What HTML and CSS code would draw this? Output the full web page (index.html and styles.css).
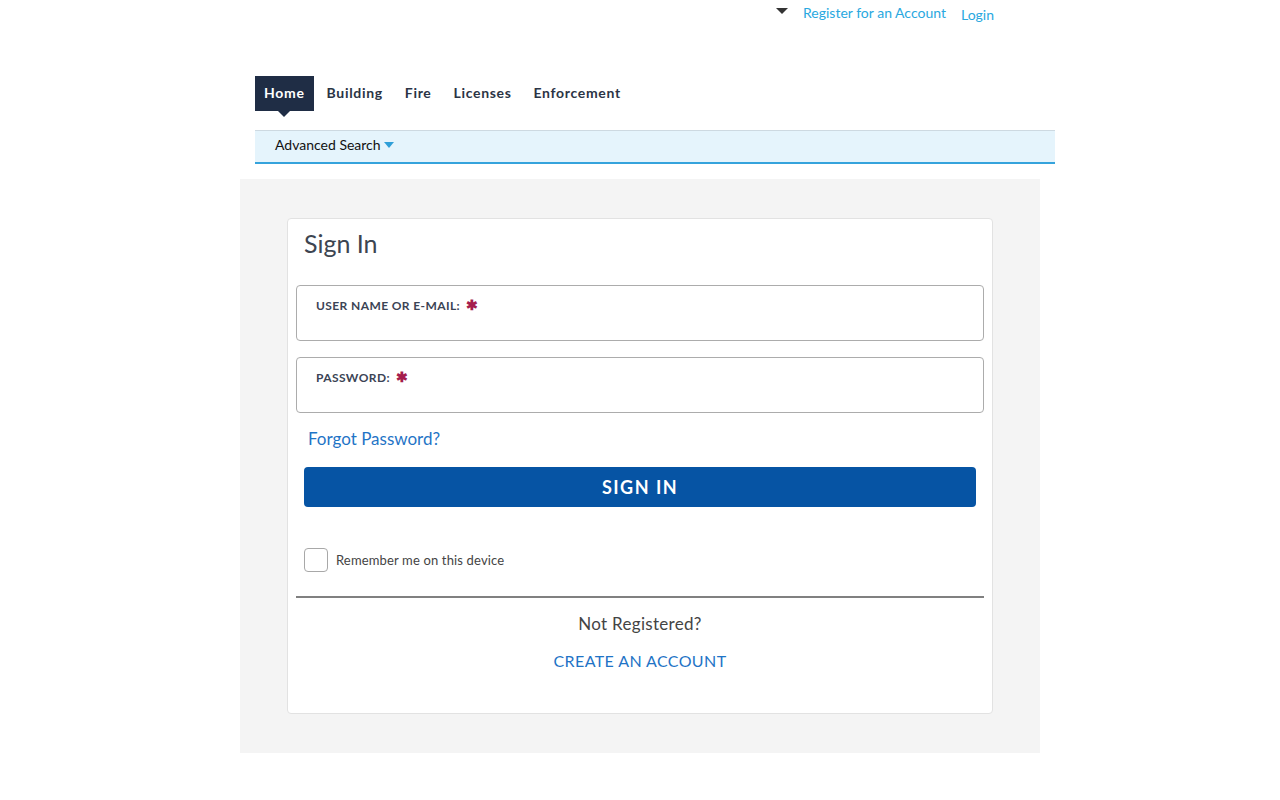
FILE: index.html
```html
<!DOCTYPE html>
<html lang="en">
<head>
    <meta charset="UTF-8">
    <meta name="viewport" content="width=device-width, initial-scale=1.0">
    <title>Sign In</title>
    <link rel="stylesheet" href="styles.css">
</head>
<body>
    <div class="header">
        <div class="top-links">
            <span class="caret-down"></span>
            <a href="#" class="top-link">Register for an Account</a>
            <a href="#" class="top-link login">Login</a>
        </div>

        <ul class="main-nav">
            <li class="nav-item active"><a href="#">Home</a></li>
            <li class="nav-item"><a href="#">Building</a></li>
            <li class="nav-item"><a href="#">Fire</a></li>
            <li class="nav-item"><a href="#">Licenses</a></li>
            <li class="nav-item"><a href="#">Enforcement</a></li>
        </ul>

        <div class="sub-nav">
            <a href="#" class="adv-search">Advanced Search <span class="caret-blue"></span></a>
        </div>
    </div>

    <div class="content">
        <div class="signin-card">
            <h2 class="card-title">Sign In</h2>

            <form id="signInForm">
                <div class="field">
                    <label for="username">User Name or E-mail: <span class="req">&#10033;</span></label>
                    <input type="text" id="username" name="username">
                </div>

                <div class="field">
                    <label for="password">Password: <span class="req">&#10033;</span></label>
                    <input type="password" id="password" name="password">
                </div>

                <a href="#" class="forgot">Forgot Password?</a>

                <button type="submit" class="signin-btn">Sign In</button>

                <label class="remember">
                    <input type="checkbox" name="remember">
                    <span class="box"></span>
                    Remember me on this device
                </label>
            </form>

            <div class="register">
                <p>Not Registered?</p>
                <a href="#">Create an Account</a>
            </div>
        </div>
    </div>
</body>
</html>
```

FILE: styles.css
```css
* {
    box-sizing: border-box;
}
body {
    margin: 0;
    font-family: Lato, "Open Sans", Arial, sans-serif;
    color: #3d4551;
    background: white;
}
a {
    text-decoration: none;
}
.header {
    width: 800px;
    margin-left: calc(50% - 385px);
}
.top-links {
    display: flex;
    justify-content: flex-end;
    align-items: center;
    height: 28px;
    padding-right: 61px;
    padding-bottom: 4px;
    font-size: 14px;
}
.caret-down {
    width: 0;
    height: 0;
    border-left: 6px solid transparent;
    border-right: 6px solid transparent;
    border-top: 6px solid #333;
    margin-right: 15px;
    margin-bottom: 2px;
}
.top-link {
    color: #29a8e0;
}
.login {
    margin-left: 15px;
    margin-top: 4px;
}
.main-nav {
    list-style: none;
    margin: 48px 0 0;
    padding: 0;
    display: flex;
    height: 35px;
}
.nav-item a {
    display: flex;
    align-items: center;
    height: 35px;
    padding: 0 11px 3px;
    font-size: 14px;
    font-weight: bold;
    letter-spacing: 0.68px;
    color: #2b3445;
}
.nav-item.active {
    position: relative;
    margin-right: 2px;
}
.nav-item.active a {
    background: #1f2d45;
    color: white;
    padding: 0 9px 3px;
}
.nav-item.active::after {
    content: "";
    position: absolute;
    left: 50%;
    top: 35px;
    margin-left: -6px;
    border-left: 6px solid transparent;
    border-right: 6px solid transparent;
    border-top: 6px solid #1f2d45;
}
.sub-nav {
    margin-top: 19px;
    height: 34px;
    background: #e5f4fc;
    border-top: 1px solid #cdd9e1;
    border-bottom: 2px solid #35a3dc;
    display: flex;
    align-items: center;
    padding: 0 0 5px 20px;
}
.adv-search {
    font-size: 14px;
    color: #111;
    display: flex;
    align-items: center;
}
.caret-blue {
    width: 0;
    height: 0;
    border-left: 5px solid transparent;
    border-right: 5px solid transparent;
    border-top: 6px solid #2f9fd8;
    margin-left: 3px;
    margin-top: 2px;
}
.content {
    width: 800px;
    margin: 15px auto 0;
    background: #f4f4f4;
    padding: 39px 47px 39px 47px;
}
.signin-card {
    background: white;
    border: 1px solid #e2e2e2;
    border-radius: 4px;
    padding: 0 8px 42px;
}
.card-title {
    margin: 0;
    padding: 10px 8px 0;
    font-size: 25px;
    font-weight: normal;
    color: #3d4551;
    line-height: 28px;
}
#signInForm {
    margin-top: 28px;
}
.field {
    position: relative;
    margin-bottom: 16px;
}
.field label {
    position: absolute;
    left: 20px;
    top: 11px;
    font-size: 12px;
    font-weight: bold;
    letter-spacing: 0.4px;
    text-transform: uppercase;
    color: #3b4455;
}
.req {
    color: #a51d4d;
    margin-left: 3px;
    font-size: 14px;
}
.field input {
    width: 100%;
    height: 56px;
    border: 1px solid #acacac;
    border-radius: 4px;
    padding: 26px 19px 4px;
    font-size: 14px;
    font-family: inherit;
}
.forgot {
    display: block;
    margin: 12px 0 0 12px;
    font-size: 17px;
    color: #1f74c6;
    line-height: 20px;
}
.signin-btn {
    display: block;
    width: calc(100% - 16px);
    margin: 18px 8px 0;
    height: 40px;
    border: none;
    border-radius: 4px;
    background: #0654a4;
    color: white;
    font-family: inherit;
    font-size: 18px;
    font-weight: bold;
    letter-spacing: 1.5px;
    text-transform: uppercase;
    cursor: pointer;
}
.remember {
    display: flex;
    align-items: center;
    margin-top: 41px;
    font-size: 13px;
    letter-spacing: 0.15px;
    color: #444;
    cursor: pointer;
    padding: 0 0 24px 8px;
    border-bottom: 2px solid #808080;
}
.remember input {
    display: none;
}
.remember .box {
    width: 24px;
    height: 24px;
    border: 1px solid #a8a8a8;
    border-radius: 4px;
    margin-right: 8px;
}
.register {
    text-align: center;
}
.register p {
    margin: 16px 0 0;
    font-size: 17px;
    letter-spacing: 0.3px;
    color: #444;
    line-height: 20px;
}
.register a {
    display: inline-block;
    margin-top: 17px;
    font-size: 16px;
    color: #1f74c6;
    letter-spacing: 0.4px;
    line-height: 20px;
    text-transform: uppercase;
}
```
